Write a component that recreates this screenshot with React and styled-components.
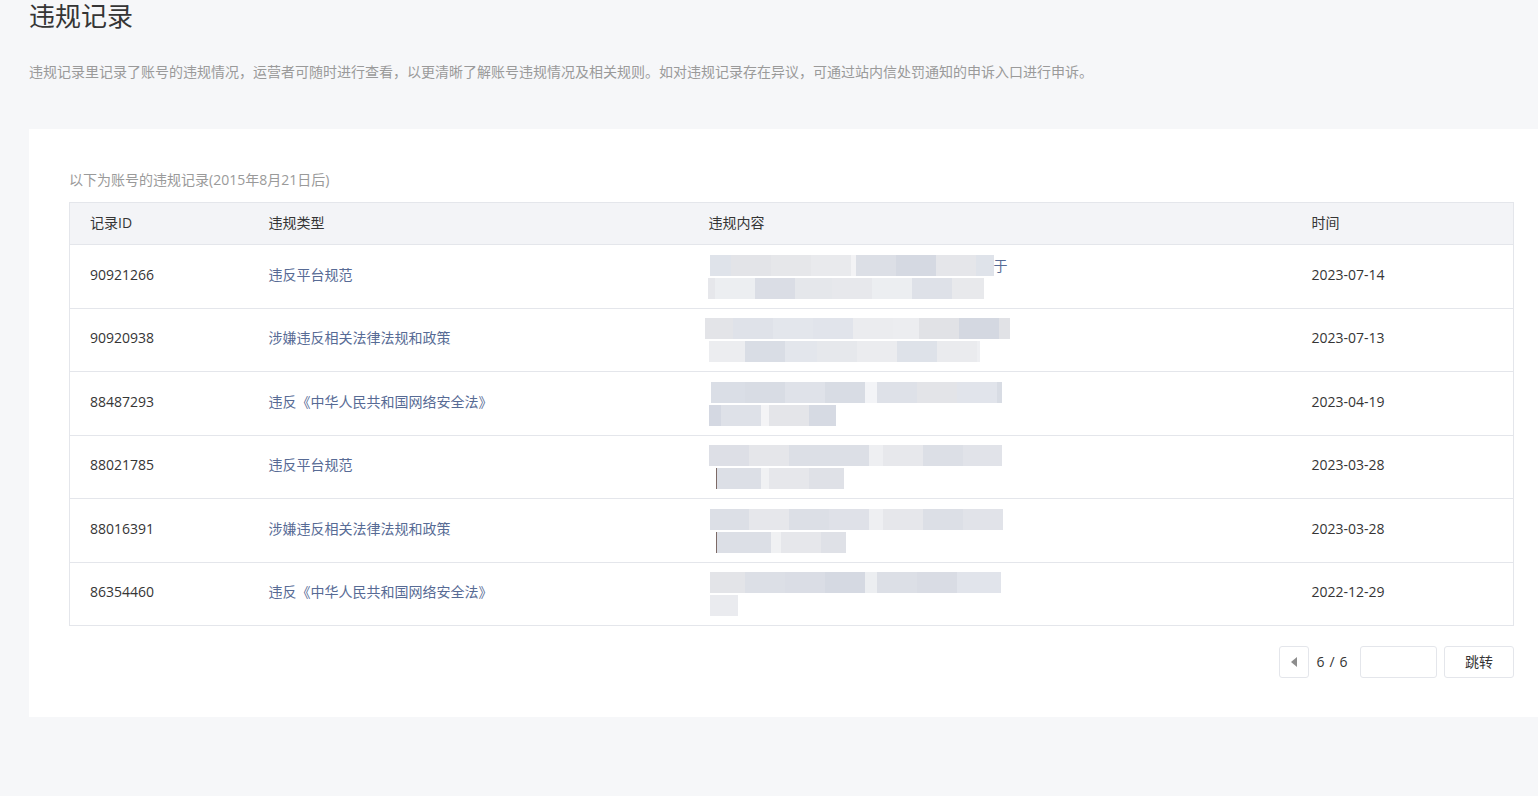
import styled, { createGlobalStyle } from "styled-components";

const GlobalStyle = createGlobalStyle`
  html, body {
    margin: 0;
    padding: 0;
    background: #f6f7f9;
    overflow-x: hidden;
  }
  body {
    font-family: "Open Sans", "Noto Sans CJK SC", sans-serif;
    color: #353535;
  }
`;

const CONTENT_LEFT = 708;

/** 打码内容块：[起点x, 终点x, 颜色] */
const records = [
  {
    id: "90921266",
    type: "违反平台规范",
    date: "2023-07-14",
    lines: [
      {
        tail: "于",
        cells: [
          [709, 730, "#dfe3ea"], [730, 770, "#e3e4e8"], [770, 810, "#e6e7ea"], [810, 850, "#e9eaed"],
          [850, 855, "#f3f3f5"], [855, 895, "#dcdfe6"], [895, 935, "#d5d9e2"], [935, 975, "#e5e6ea"],
          [975, 993, "#dfe3ea"],
        ],
      },
      {
        cells: [
          [707, 714, "#e6e7eb"], [714, 754, "#eceef1"], [754, 794, "#dadde5"], [794, 831, "#e5e7eb"],
          [831, 871, "#e7e8ec"], [871, 911, "#eceef1"], [911, 951, "#dee1e8"], [951, 983, "#e8e9ec"],
        ],
      },
    ],
  },
  {
    id: "90920938",
    type: "涉嫌违反相关法律法规和政策",
    date: "2023-07-13",
    lines: [
      {
        cells: [
          [704, 732, "#e3e4e8"], [732, 772, "#dfe2e9"], [772, 812, "#e3e6ec"], [812, 852, "#e1e4eb"],
          [852, 892, "#ebecef"], [892, 918, "#ecedf0"], [918, 958, "#e1e2e6"], [958, 998, "#d4d8e1"],
          [998, 1009, "#e1e2e6"],
        ],
      },
      {
        cells: [
          [708, 744, "#ecedf0"], [744, 784, "#d9dde5"], [784, 816, "#e3e6ec"], [816, 856, "#e6e8ec"],
          [856, 896, "#ebecef"], [896, 936, "#dee2e9"], [936, 976, "#eaebee"], [976, 979, "#eeeff2"],
        ],
      },
    ],
  },
  {
    id: "88487293",
    type: "违反《中华人民共和国网络安全法》",
    date: "2023-04-19",
    lines: [
      {
        cells: [
          [710, 744, "#dadee6"], [744, 784, "#d8dce4"], [784, 824, "#dfe2e9"], [824, 864, "#d8dce4"],
          [864, 876, "#f3f4f7"], [876, 916, "#dee1e8"], [916, 956, "#e3e4e8"], [956, 996, "#e1e4eb"],
          [996, 1001, "#d8dce4"],
        ],
      },
      {
        cells: [
          [708, 720, "#d4d8e2"], [720, 760, "#dee1e8"], [760, 768, "#f4f4f6"], [768, 808, "#e4e5e9"],
          [808, 835, "#d6dae3"],
        ],
      },
    ],
  },
  {
    id: "88021785",
    type: "违反平台规范",
    date: "2023-03-28",
    lines: [
      {
        cells: [
          [708, 748, "#dddfe6"], [748, 788, "#e5e6ea"], [788, 828, "#dcdfe6"], [828, 868, "#dcdfe6"],
          [868, 882, "#eeeff2"], [882, 922, "#e7e8ec"], [922, 962, "#dcdfe6"], [962, 1001, "#e1e3e9"],
        ],
      },
      {
        cells: [
          [715, 716, "#7d6a66"], [716, 760, "#dcdfe6"], [760, 768, "#f0f1f3"], [768, 808, "#e6e7eb"],
          [808, 843, "#dfe1e7"],
        ],
      },
    ],
  },
  {
    id: "88016391",
    type: "涉嫌违反相关法律法规和政策",
    date: "2023-03-28",
    lines: [
      {
        cells: [
          [709, 748, "#dcdfe6"], [748, 788, "#e6e7eb"], [788, 828, "#dcdfe6"], [828, 868, "#dfe1e8"],
          [868, 882, "#eeeff2"], [882, 922, "#e6e7eb"], [922, 962, "#dcdfe6"], [962, 1002, "#e1e3e9"],
        ],
      },
      {
        cells: [
          [715, 716, "#7d6a66"], [716, 770, "#dcdfe6"], [770, 780, "#f0f1f3"], [780, 820, "#e6e7eb"],
          [820, 845, "#dfe1e7"],
        ],
      },
    ],
  },
  {
    id: "86354460",
    type: "违反《中华人民共和国网络安全法》",
    date: "2022-12-29",
    lines: [
      {
        cells: [
          [709, 744, "#e3e4e8"], [744, 784, "#dcdfe6"], [784, 824, "#dadde5"], [824, 864, "#d5d9e2"],
          [864, 876, "#eceef1"], [876, 916, "#dcdfe6"], [916, 956, "#d9dce4"], [956, 1000, "#e1e4eb"],
        ],
      },
      {
        cells: [[709, 737, "#eaebef"]],
      },
    ],
  },
];

const PrevIcon = () => (
  <svg width="6" height="10" viewBox="0 0 6 10" aria-hidden="true">
    <path d="M6 0 L0 5 L6 10 Z" fill="#8d8d8d" />
  </svg>
);

const MaskedContent = ({ lines }) => (
  <MaskWrap>
    {lines.map((line, i) => (
      <MaskLine key={i} $offset={line.cells[0][0] - CONTENT_LEFT}>
        {line.cells.map(([from, to, color], j) => (
          <MaskCell key={j} style={{ width: to - from, background: color }} />
        ))}
        {line.tail && <MaskTail>{line.tail}</MaskTail>}
      </MaskLine>
    ))}
  </MaskWrap>
);

const App = () => {
  return (
    <>
      <GlobalStyle />
      <Page>
        <PageTitle>违规记录</PageTitle>
        <PageDesc>
          违规记录里记录了账号的违规情况，运营者可随时进行查看，以更清晰了解账号违规情况及相关规则。如对违规记录存在异议，可通过站内信处罚通知的申诉入口进行申诉。
        </PageDesc>

        <RecordCard>
          <CardTip>以下为账号的违规记录(2015年8月21日后)</CardTip>
          <RecordTable>
            <colgroup>
              <col style={{ width: 179 }} />
              <col style={{ width: 440 }} />
              <col style={{ width: 603 }} />
              <col />
            </colgroup>
            <thead>
              <tr>
                <HeadCell>记录ID</HeadCell>
                <HeadCell>违规类型</HeadCell>
                <HeadCell>违规内容</HeadCell>
                <HeadCell>时间</HeadCell>
              </tr>
            </thead>
            <tbody>
              {records.map((item) => (
                <tr key={item.id}>
                  <BodyCell>{item.id}</BodyCell>
                  <BodyCell $link>{item.type}</BodyCell>
                  <BodyCell>
                    <MaskedContent lines={item.lines} />
                  </BodyCell>
                  <BodyCell>{item.date}</BodyCell>
                </tr>
              ))}
            </tbody>
          </RecordTable>

          <Pager>
            <PagerArrow type="button" aria-label="上一页">
              <PrevIcon />
            </PagerArrow>
            <PagerNum>6 / 6</PagerNum>
            <PagerInput type="text" />
            <PagerButton type="button">跳转</PagerButton>
          </Pager>
        </RecordCard>
      </Page>
    </>
  );
};

const Page = styled.div`
  padding: 0 0 79px 29px;
  min-height: 100vh;
  box-sizing: border-box;
`;

const PageTitle = styled.h2`
  margin: -1px 0 0;
  font-size: 26px;
  line-height: 34px;
  font-weight: 400;
  color: #353535;
`;

const PageDesc = styled.p`
  margin: 29px 0 0;
  font-size: 14px;
  line-height: 20px;
  color: #9a9a9a;
`;

const RecordCard = styled.section`
  margin-top: 47px;
  background: #fff;
  padding: 41px 24px 39px 40px;
`;

const CardTip = styled.p`
  margin: 0 0 12px;
  font-size: 14px;
  line-height: 20px;
  color: #9a9a9a;
`;

const RecordTable = styled.table`
  width: 1445px;
  table-layout: fixed;
  border-collapse: collapse;
  border: 1px solid #e4e6eb;
`;

const HeadCell = styled.th`
  height: 39px;
  padding: 0 20px 2px;
  background: #f3f4f7;
  border-bottom: 1px solid #e4e6eb;
  text-align: left;
  font-size: 14px;
  line-height: 20px;
  font-weight: 400;
  color: #353535;
`;

const BodyCell = styled.td`
  height: 59.5px;
  padding: 0 20px 3px;
  border-bottom: 1px solid #e4e6eb;
  font-size: 14px;
  line-height: 20px;
  color: ${({ $link }) => ($link ? "#576b95" : "#353535")};
  vertical-align: middle;
`;

const MaskWrap = styled.div`
  display: flex;
  flex-direction: column;
  gap: 2px;
  margin-left: -20px;
  margin-top: 4px;
`;

const MaskLine = styled.div`
  display: flex;
  align-items: center;
  height: 21px;
  padding-left: ${({ $offset }) => $offset + 20}px;
`;

const MaskCell = styled.span`
  display: block;
  height: 100%;
  flex-shrink: 0;
`;

const MaskTail = styled.span`
  font-size: 14px;
  line-height: 21px;
  color: #576b95;
`;

const Pager = styled.div`
  display: flex;
  justify-content: flex-end;
  align-items: center;
  width: 1445px;
  margin-top: 20px;
`;

const PagerArrow = styled.button`
  display: flex;
  align-items: center;
  justify-content: center;
  width: 30px;
  height: 32px;
  padding: 0;
  background: #fff;
  border: 1px solid #e4e6eb;
  border-radius: 3px;
  cursor: pointer;
`;

const PagerNum = styled.span`
  margin: 0 12px 0 8px;
  font-size: 14px;
  line-height: 20px;
  letter-spacing: 0.6px;
  color: #353535;
`;

const PagerInput = styled.input`
  width: 77px;
  height: 32px;
  box-sizing: border-box;
  border: 1px solid #e4e6eb;
  border-radius: 3px;
  outline: none;
`;

const PagerButton = styled.button`
  width: 70px;
  height: 32px;
  margin-left: 7px;
  background: #fff;
  border: 1px solid #e4e6eb;
  border-radius: 3px;
  font-family: inherit;
  font-size: 14px;
  line-height: 20px;
  color: #353535;
  cursor: pointer;
`;

export default App;
